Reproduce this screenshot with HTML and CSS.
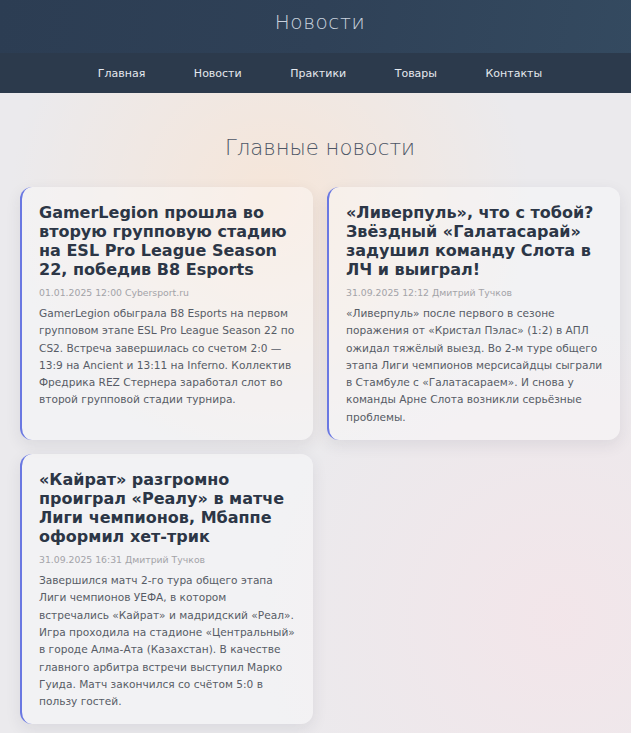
FILE: index.html
```html
<!DOCTYPE html>
<html lang="ru">
<head>
<meta charset="utf-8">
<title>Новости</title>
<link rel="stylesheet" href="styles.css">
</head>
<body>
<div class="page">
  <header class="site-header">
    <h1 class="site-title">Новости</h1>
  </header>
  <nav class="site-nav">
    <a href="#">Главная</a>
    <a href="#">Новости</a>
    <a href="#">Практики</a>
    <a href="#">Товары</a>
    <a href="#">Контакты</a>
  </nav>
  <main class="main">
    <h2 class="section-title">Главные новости</h2>
    <div class="news-grid">
      <article class="card">
        <h3 class="card-title">GamerLegion прошла во вторую групповую стадию на ESL Pro League Season 22, победив B8 Esports</h3>
        <div class="card-meta">01.01.2025 12:00 Cybersport.ru</div>
        <p class="card-text">GamerLegion обыграла B8 Esports на первом групповом этапе ESL Pro League Season 22 по CS2. Встреча завершилась со счетом 2:0 — 13:9 на Ancient и 13:11 на Inferno. Коллектив Фредрика REZ Стернера заработал слот во второй групповой стадии турнира.</p>
      </article>
      <article class="card">
        <h3 class="card-title">«Ливерпуль», что с тобой? Звёздный «Галатасарай» задушил команду Слота в ЛЧ и выиграл!</h3>
        <div class="card-meta">31.09.2025 12:12 Дмитрий Тучков</div>
        <p class="card-text">«Ливерпуль» после первого в сезоне поражения от «Кристал Пэлас» (1:2) в АПЛ ожидал тяжёлый выезд. Во 2-м туре общего этапа Лиги чемпионов мерсисайдцы сыграли в Стамбуле с «Галатасараем». И снова у команды Арне Слота возникли серьёзные проблемы.</p>
      </article>
      <article class="card">
        <h3 class="card-title">«Кайрат» разгромно проиграл «Реалу» в матче Лиги чемпионов, Мбаппе оформил хет-трик</h3>
        <div class="card-meta">31.09.2025 16:31 Дмитрий Тучков</div>
        <p class="card-text">Завершился матч 2-го тура общего этапа Лиги чемпионов УЕФА, в котором встречались «Кайрат» и мадридский «Реал». Игра проходила на стадионе «Центральный» в городе Алма-Ата (Казахстан). В качестве главного арбитра встречи выступил Марко Гуида. Матч закончился со счётом 5:0 в пользу гостей.</p>
      </article>
    </div>
  </main>
</div>
</body>
</html>
```

FILE: styles.css
```css
* { box-sizing: border-box; }

html, body {
  margin: 0;
  padding: 0;
}

body {
  font-family: "DejaVu Sans", Verdana, sans-serif;
  background-color: #ebeaed;
  background-image:
    radial-gradient(circle at 270px 200px, rgba(255, 226, 200, 0.55) 0, rgba(255, 226, 200, 0) 260px),
    radial-gradient(circle at 560px 620px, rgba(250, 225, 230, 0.5) 0, rgba(250, 225, 230, 0) 300px);
  color: #333;
}

.page {
  min-width: 640px;
}

.site-header {
  height: 53px;
  background: linear-gradient(100deg, #2c3d53 0%, #2f4157 50%, #344a60 100%);
  display: flex;
  align-items: center;
  justify-content: center;
}

.site-title {
  margin: 0;
  font-size: 20px;
  font-weight: 300;
  letter-spacing: 0.6px;
  color: #c9d2de;
  padding-bottom: 9px;
}

.site-nav {
  height: 40px;
  background: #2c3a4c;
  display: flex;
  align-items: center;
  justify-content: center;
  gap: 48.5px;
}

.site-nav a {
  color: #e4e8ee;
  text-decoration: none;
  font-size: 11px;
}

.main {
  padding: 41px 20px 20px;
}

.section-title {
  margin: 0 0 25px;
  text-align: center;
  font-size: 21.2px;
  font-weight: 300;
  color: #4d5666;
  line-height: 28px;
}

.news-grid {
  display: grid;
  grid-template-columns: 1fr 1fr;
  gap: 14px;
}

.card {
  background: rgba(255, 255, 255, 0.38);
  border-left: 2px solid #6a78e2;
  border-radius: 12px;
  box-shadow: 0 5px 16px rgba(40, 40, 70, 0.09);
  padding: 16px 17px 14px;
}

.card-title {
  margin: 0;
  font-size: 16px;
  line-height: 19px;
  font-weight: bold;
  color: #2c3646;
}

.card-meta {
  margin: 6px 0 5px;
  font-size: 9.3px;
  line-height: 15px;
  color: #a3a3a8;
}

.card-text {
  margin: 0;
  font-size: 10.6px;
  line-height: 17.3px;
  color: #575c66;
}
```
